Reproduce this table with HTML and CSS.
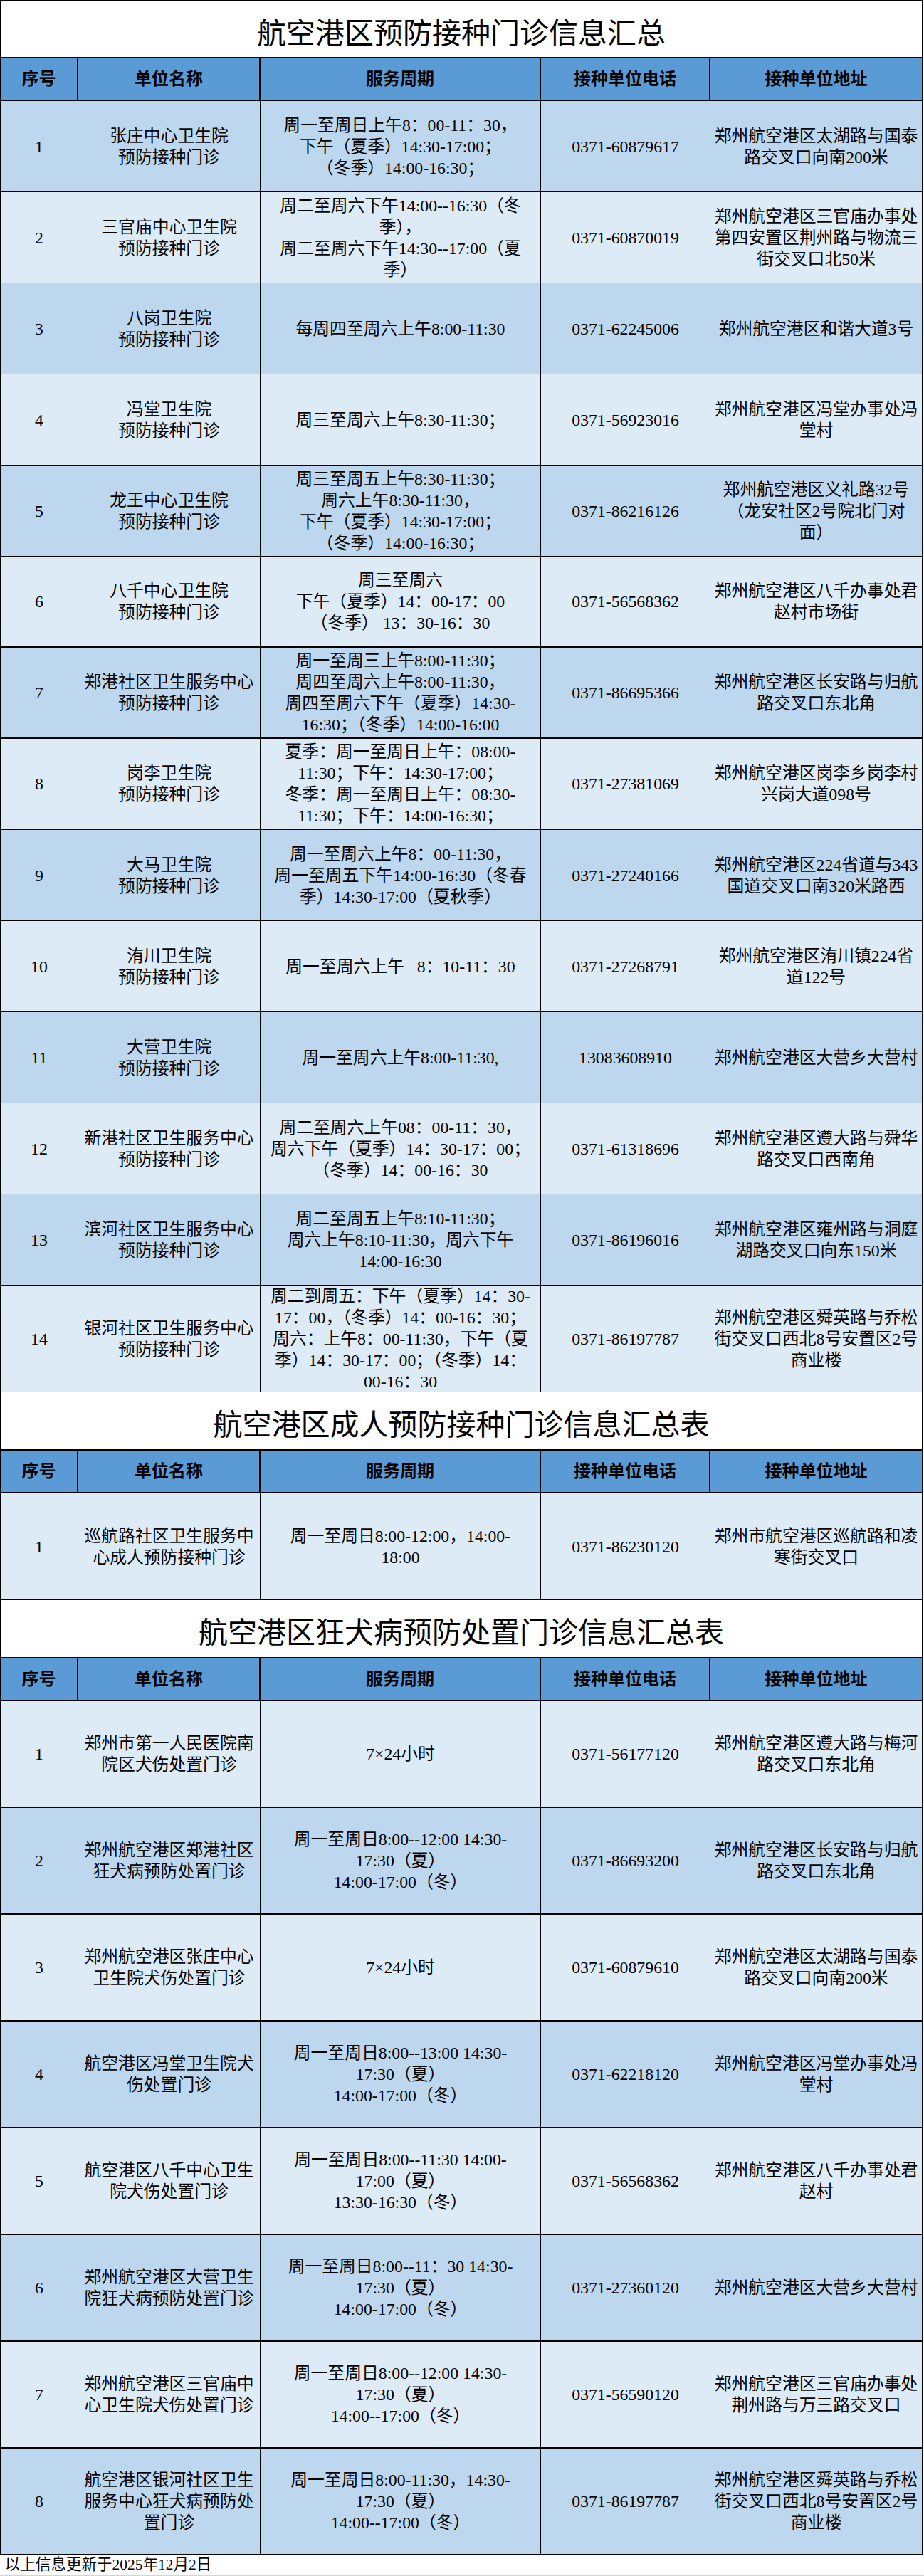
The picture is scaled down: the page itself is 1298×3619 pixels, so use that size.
FILE: index.html
```html
<!DOCTYPE html>
<html lang="zh-CN">
<head>
<meta charset="utf-8">
<title>航空港区预防接种门诊信息汇总</title>
<link rel="stylesheet" href="styles.css">
</head>
<body>
<div class="sheet">
  <div class="title first">航空港区预防接种门诊信息汇总</div>
  <div class="row head"><div><span>序号</span></div><div><span>单位名称</span></div><div><span>服务周期</span></div><div><span>接种单位电话</span></div><div><span>接种单位地址</span></div></div>

  <div class="row r128 dark"><div><span>1</span></div><div><span>张庄中心卫生院<br>预防接种门诊</span></div><div><span>周一至周日上午8：00-11：30，<br>下午（夏季）14:30-17:00；<br>（冬季）14:00-16:30；</span></div><div><span>0371-60879617</span></div><div><span>郑州航空港区太湖路与国泰<br>路交叉口向南200米</span></div></div>
  <div class="row r128 light"><div><span>2</span></div><div><span>三官庙中心卫生院<br>预防接种门诊</span></div><div><span>周二至周六下午14:00--16:30（冬<br>季），<br>周二至周六下午14:30--17:00（夏<br>季）</span></div><div><span>0371-60870019</span></div><div><span>郑州航空港区三官庙办事处<br>第四安置区荆州路与物流三<br>街交叉口北50米</span></div></div>
  <div class="row r128 dark"><div><span>3</span></div><div><span>八岗卫生院<br>预防接种门诊</span></div><div><span>每周四至周六上午8:00-11:30</span></div><div><span>0371-62245006</span></div><div><span>郑州航空港区和谐大道3号</span></div></div>
  <div class="row r128 light"><div><span>4</span></div><div><span>冯堂卫生院<br>预防接种门诊</span></div><div><span>周三至周六上午8:30-11:30；</span></div><div><span>0371-56923016</span></div><div><span>郑州航空港区冯堂办事处冯<br>堂村</span></div></div>
  <div class="row r128 dark"><div><span>5</span></div><div><span>龙王中心卫生院<br>预防接种门诊</span></div><div><span>周三至周五上午8:30-11:30；<br>周六上午8:30-11:30，<br>下午（夏季）14:30-17:00；<br>（冬季）14:00-16:30；</span></div><div><span>0371-86216126</span></div><div><span>郑州航空港区义礼路32号<br>（龙安社区2号院北门对<br>面）</span></div></div>
  <div class="row r128 light thick"><div><span>6</span></div><div><span>八千中心卫生院<br>预防接种门诊</span></div><div><span>周三至周六<br>下午（夏季）14：00-17：00<br>（冬季） 13：30-16：30</span></div><div><span>0371-56568362</span></div><div><span>郑州航空港区八千办事处君<br>赵村市场街</span></div></div>
  <div class="row r128 dark thick"><div><span>7</span></div><div><span>郑港社区卫生服务中心<br>预防接种门诊</span></div><div><span>周一至周三上午8:00-11:30；<br>周四至周六上午8:00-11:30，<br>周四至周六下午（夏季）14:30-<br>16:30；（冬季）14:00-16:00</span></div><div><span>0371-86695366</span></div><div><span>郑州航空港区长安路与归航<br>路交叉口东北角</span></div></div>
  <div class="row r128 light thick"><div><span>8</span></div><div><span>岗李卫生院<br>预防接种门诊</span></div><div><span>夏季：周一至周日上午：08:00-<br>11:30；下午：14:30-17:00；<br>冬季：周一至周日上午：08:30-<br>11:30；下午：14:00-16:30；</span></div><div><span>0371-27381069</span></div><div><span>郑州航空港区岗李乡岗李村<br>兴岗大道098号</span></div></div>
  <div class="row r128 dark"><div><span>9</span></div><div><span>大马卫生院<br>预防接种门诊</span></div><div><span>周一至周六上午8：00-11:30，<br>周一至周五下午14:00-16:30（冬春<br>季）14:30-17:00（夏秋季）</span></div><div><span>0371-27240166</span></div><div><span>郑州航空港区224省道与343<br>国道交叉口南320米路西</span></div></div>
  <div class="row r128 light"><div><span>10</span></div><div><span>洧川卫生院<br>预防接种门诊</span></div><div><span>周一至周六上午&nbsp;&nbsp;&nbsp;8：10-11：30</span></div><div><span>0371-27268791</span></div><div><span>郑州航空港区洧川镇224省<br>道122号</span></div></div>
  <div class="row r128 dark"><div><span>11</span></div><div><span>大营卫生院<br>预防接种门诊</span></div><div><span>周一至周六上午8:00-11:30,</span></div><div><span>13083608910</span></div><div><span>郑州航空港区大营乡大营村</span></div></div>
  <div class="row r128 light"><div><span>12</span></div><div><span>新港社区卫生服务中心<br>预防接种门诊</span></div><div><span>周二至周六上午08：00-11：30，<br>周六下午（夏季）14：30-17：00；<br>（冬季）14：00-16：30</span></div><div><span>0371-61318696</span></div><div><span>郑州航空港区遵大路与舜华<br>路交叉口西南角</span></div></div>
  <div class="row r128 dark"><div><span>13</span></div><div><span>滨河社区卫生服务中心<br>预防接种门诊</span></div><div><span>周二至周五上午8:10-11:30；<br>周六上午8:10-11:30，周六下午<br>14:00-16:30</span></div><div><span>0371-86196016</span></div><div><span>郑州航空港区雍州路与洞庭<br>湖路交叉口向东150米</span></div></div>
  <div class="row r150 light"><div><span>14</span></div><div><span>银河社区卫生服务中心<br>预防接种门诊</span></div><div><span>周二到周五：下午（夏季）14：30-<br>17：00，（冬季）14：00-16：30；<br>周六：上午8：00-11:30，下午（夏<br>季）14：30-17：00；（冬季）14：<br>00-16：30</span></div><div><span>0371-86197787</span></div><div><span>郑州航空港区舜英路与乔松<br>街交叉口西北8号安置区2号<br>商业楼</span></div></div>

  <div class="title">航空港区成人预防接种门诊信息汇总表</div>
  <div class="row head"><div><span>序号</span></div><div><span>单位名称</span></div><div><span>服务周期</span></div><div><span>接种单位电话</span></div><div><span>接种单位地址</span></div></div>
  <div class="row r150 light"><div><span>1</span></div><div><span>巡航路社区卫生服务中<br>心成人预防接种门诊</span></div><div><span>周一至周日8:00-12:00，14:00-<br>18:00</span></div><div><span>0371-86230120</span></div><div><span>郑州市航空港区巡航路和凌<br>寒街交叉口</span></div></div>

  <div class="title">航空港区狂犬病预防处置门诊信息汇总表</div>
  <div class="row head"><div><span>序号</span></div><div><span>单位名称</span></div><div><span>服务周期</span></div><div><span>接种单位电话</span></div><div><span>接种单位地址</span></div></div>
  <div class="row r150 light thick"><div><span>1</span></div><div><span>郑州市第一人民医院南<br>院区犬伤处置门诊</span></div><div><span>7×24小时</span></div><div><span>0371-56177120</span></div><div><span>郑州航空港区遵大路与梅河<br>路交叉口东北角</span></div></div>
  <div class="row r150 dark thick"><div><span>2</span></div><div><span>郑州航空港区郑港社区<br>狂犬病预防处置门诊</span></div><div><span>周一至周日8:00--12:00 14:30-<br>17:30（夏）<br>14:00-17:00（冬）</span></div><div><span>0371-86693200</span></div><div><span>郑州航空港区长安路与归航<br>路交叉口东北角</span></div></div>
  <div class="row r150 light thick"><div><span>3</span></div><div><span>郑州航空港区张庄中心<br>卫生院犬伤处置门诊</span></div><div><span>7×24小时</span></div><div><span>0371-60879610</span></div><div><span>郑州航空港区太湖路与国泰<br>路交叉口向南200米</span></div></div>
  <div class="row r150 dark thick"><div><span>4</span></div><div><span>航空港区冯堂卫生院犬<br>伤处置门诊</span></div><div><span>周一至周日8:00--13:00 14:30-<br>17:30（夏）<br>14:00-17:00（冬）</span></div><div><span>0371-62218120</span></div><div><span>郑州航空港区冯堂办事处冯<br>堂村</span></div></div>
  <div class="row r150 light thick"><div><span>5</span></div><div><span>航空港区八千中心卫生<br>院犬伤处置门诊</span></div><div><span>周一至周日8:00--11:30 14:00-<br>17:00（夏）<br>13:30-16:30（冬）</span></div><div><span>0371-56568362</span></div><div><span>郑州航空港区八千办事处君<br>赵村</span></div></div>
  <div class="row r150 dark thick"><div><span>6</span></div><div><span>郑州航空港区大营卫生<br>院狂犬病预防处置门诊</span></div><div><span>周一至周日8:00--11：30 14:30-<br>17:30（夏）<br>14:00-17:00（冬）</span></div><div><span>0371-27360120</span></div><div><span>郑州航空港区大营乡大营村</span></div></div>
  <div class="row r150 light thick"><div><span>7</span></div><div><span>郑州航空港区三官庙中<br>心卫生院犬伤处置门诊</span></div><div><span>周一至周日8:00--12:00 14:30-<br>17:30（夏）<br>14:00--17:00（冬）</span></div><div><span>0371-56590120</span></div><div><span>郑州航空港区三官庙办事处<br>荆州路与万三路交叉口</span></div></div>
  <div class="row r150 dark thick"><div><span>8</span></div><div><span>航空港区银河社区卫生<br>服务中心狂犬病预防处<br>置门诊</span></div><div><span>周一至周日8:00-11:30，14:30-<br>17:30（夏）<br>14:00--17:00（冬）</span></div><div><span>0371-86197787</span></div><div><span>郑州航空港区舜英路与乔松<br>街交叉口西北8号安置区2号<br>商业楼</span></div></div>
</div>
<div class="foot">以上信息更新于2025年12月2日</div>
</body>
</html>
```

FILE: styles.css
```css
html, body {
  margin: 0;
  padding: 0;
  background: #ffffff;
}

body {
  width: 1298px;
  font-family: "Liberation Serif", "Noto Sans CJK SC", serif;
  color: #000000;
}

.sheet {
  width: 1297px;
  box-sizing: border-box;
  border-top: 1px solid #000;
  border-left: 1px solid #000;
  border-right: 2px solid #000;
}

.title {
  height: 82px;
  box-sizing: border-box;
  border-bottom: 2px solid #000;
  background: #ffffff;
  display: flex;
  align-items: center;
  justify-content: center;
  font-size: 41px;
  padding-top: 4px;
  white-space: nowrap;
}

.title.first {
  height: 81px;
}

.row {
  display: grid;
  grid-template-columns: 109px 256px 394px 238px 297px;
  box-sizing: border-box;
  border-bottom: 1px solid #000;
  font-size: 23.8px;
  line-height: 30px;
}

.row > div {
  display: flex;
  align-items: center;
  justify-content: center;
  text-align: center;
  white-space: nowrap;
  border-right: 1px solid #000;
  overflow: hidden;
}

.row > div:last-child {
  border-right: 0;
}

.head {
  height: 60px;
  background: #5b9bd5;
  border-bottom: 2px solid #000;
  font-weight: bold;
  font-size: 24px;
}

.head > div {
  border-right-width: 2px;
}

.r128 {
  height: 128px;
}

.r150 {
  height: 150px;
}

.dark {
  background: #bdd7ee;
}

.light {
  background: #ddebf7;
}

.thick {
  border-bottom-width: 2px;
}

.foot {
  height: 29px;
  box-sizing: border-box;
  padding-left: 7px;
  font-size: 21.5px;
  line-height: 27px;
  border-bottom: 2px solid #c9d6e8;
  white-space: nowrap;
}
```
